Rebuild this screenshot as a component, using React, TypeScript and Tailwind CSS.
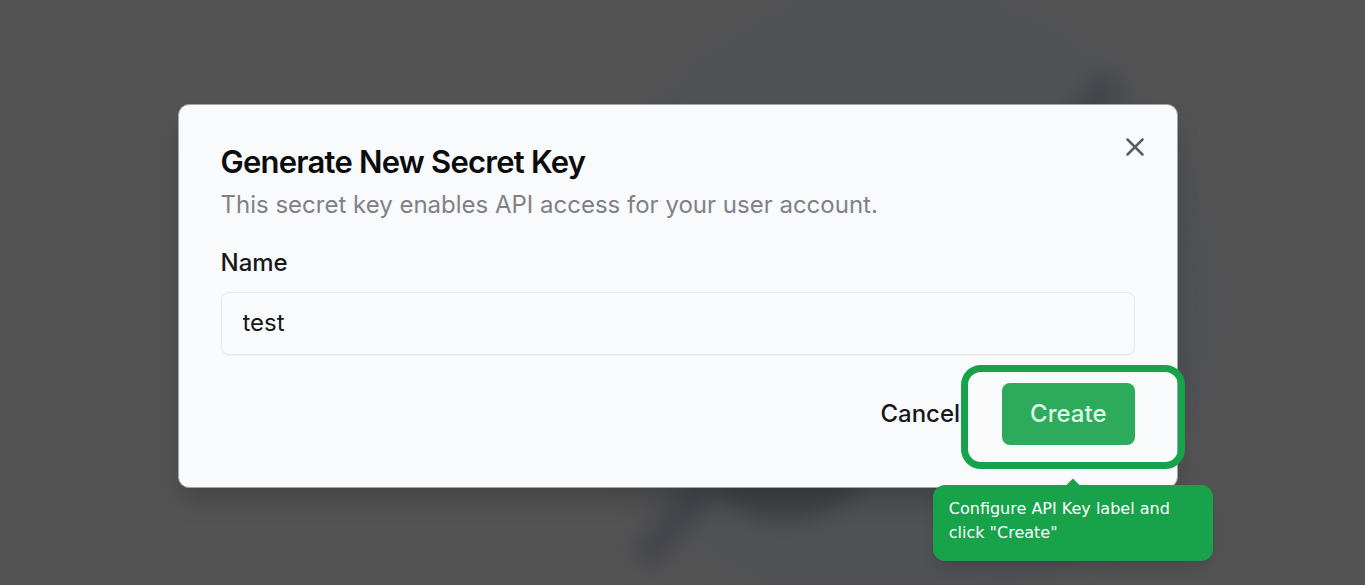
import { useState } from "react";

function Backdrop() {
  return (
    <svg
      aria-hidden="true"
      className="absolute inset-0 h-full w-full"
      viewBox="0 0 1365 585"
      preserveAspectRatio="xMidYMid slice"
    >
      <defs>
        <filter id="soft" x="-20%" y="-20%" width="140%" height="140%" colorInterpolationFilters="sRGB">
          <feGaussianBlur stdDeviation="10" />
        </filter>
      </defs>
      <g filter="url(#soft)">
        <circle cx="898" cy="300" r="318" fill="#505154" />
        <circle cx="785" cy="424" r="98" fill="#414247" />
        <path
          d="M651 550 L760 420 M1060 150 L1105 90"
          fill="none"
          stroke="#45464c"
          strokeWidth="32"
          strokeLinecap="round"
        />
      </g>
    </svg>
  );
}

function CloseIcon() {
  return (
    <svg aria-hidden="true" viewBox="0 0 18 18" className="h-[18px] w-[18px]">
      <path d="M1.5 1.5 L16.5 16.5 M16.5 1.5 L1.5 16.5" stroke="#5b5c5f" strokeWidth="2.5" strokeLinecap="round" />
    </svg>
  );
}

function Hint() {
  return (
    <div className="pointer-events-none absolute -top-[18px] -right-[50px] -bottom-[24px] -left-[41px] rounded-[20px] border-[7px] border-[#18a34a]">
      <div
        role="tooltip"
        className="absolute top-[calc(100%+23px)] left-1/2 w-[280px] -translate-x-1/2 rounded-xl bg-[#18a34a] px-4 pt-3 pb-4 font-['DejaVu_Sans',sans-serif] text-base leading-6 font-normal text-white shadow-lg"
      >
        <span className="absolute -top-1 left-1/2 h-3 w-3 -translate-x-1/2 rotate-45 bg-[#18a34a]" />
        <span className="relative">Configure API Key label and click "Create"</span>
      </div>
    </div>
  );
}

export default function App() {
  const [name, setName] = useState("test");

  return (
    <div className="relative flex min-h-screen items-center justify-center overflow-hidden bg-[#535354] pt-[7px] pr-[10px] font-[Inter,sans-serif] text-[24px] text-[#17181a]">
      <Backdrop />
      <div
        role="dialog"
        aria-labelledby="dialog-title"
        aria-describedby="dialog-description"
        className="relative flex w-full max-w-[1000px] flex-col gap-7 rounded-[11px] border border-[#a3a3a5] bg-[#f9fafc] p-[42px] shadow-[0_16px_28px_-6px_rgba(0,0,0,0.2)]"
      >
        <header className="flex items-start justify-between">
          <div className="flex flex-col gap-2.5">
            <h2 id="dialog-title" className="text-[31px] leading-[30px] font-semibold tracking-tight text-[#0b0c0e]">
              Generate New Secret Key
            </h2>
            <p id="dialog-description" className="leading-9 text-[#808186]">
              This secret key enables API access for your user account.
            </p>
          </div>
          <button type="button" aria-label="Close" className="-mt-[9px] -mr-[9px]">
            <CloseIcon />
          </button>
        </header>
        <form className="flex flex-col gap-7" onSubmit={(event) => event.preventDefault()}>
          <div className="flex flex-col gap-[17px]">
            <label htmlFor="key-name" className="leading-6 font-medium">
              Name
            </label>
            <input
              id="key-name"
              type="text"
              value={name}
              onChange={(event) => setName(event.target.value)}
              className="h-[63px] w-full rounded-lg border border-[#e7e8eb] bg-transparent px-[21px] pb-0.5 shadow-[0_1px_1px_rgba(0,0,0,0.04)] outline-none"
            />
          </div>
          <div className="flex justify-end gap-[14px]">
            <button type="button" className="h-[62px] rounded-lg px-7 font-medium">
              Cancel
            </button>
            <div className="relative">
              <button type="submit" className="h-[62px] rounded-lg bg-[#2eaa5c] px-7 font-medium text-[#dcf8e6]">
                Create
              </button>
              <Hint />
            </div>
          </div>
        </form>
      </div>
    </div>
  );
}
